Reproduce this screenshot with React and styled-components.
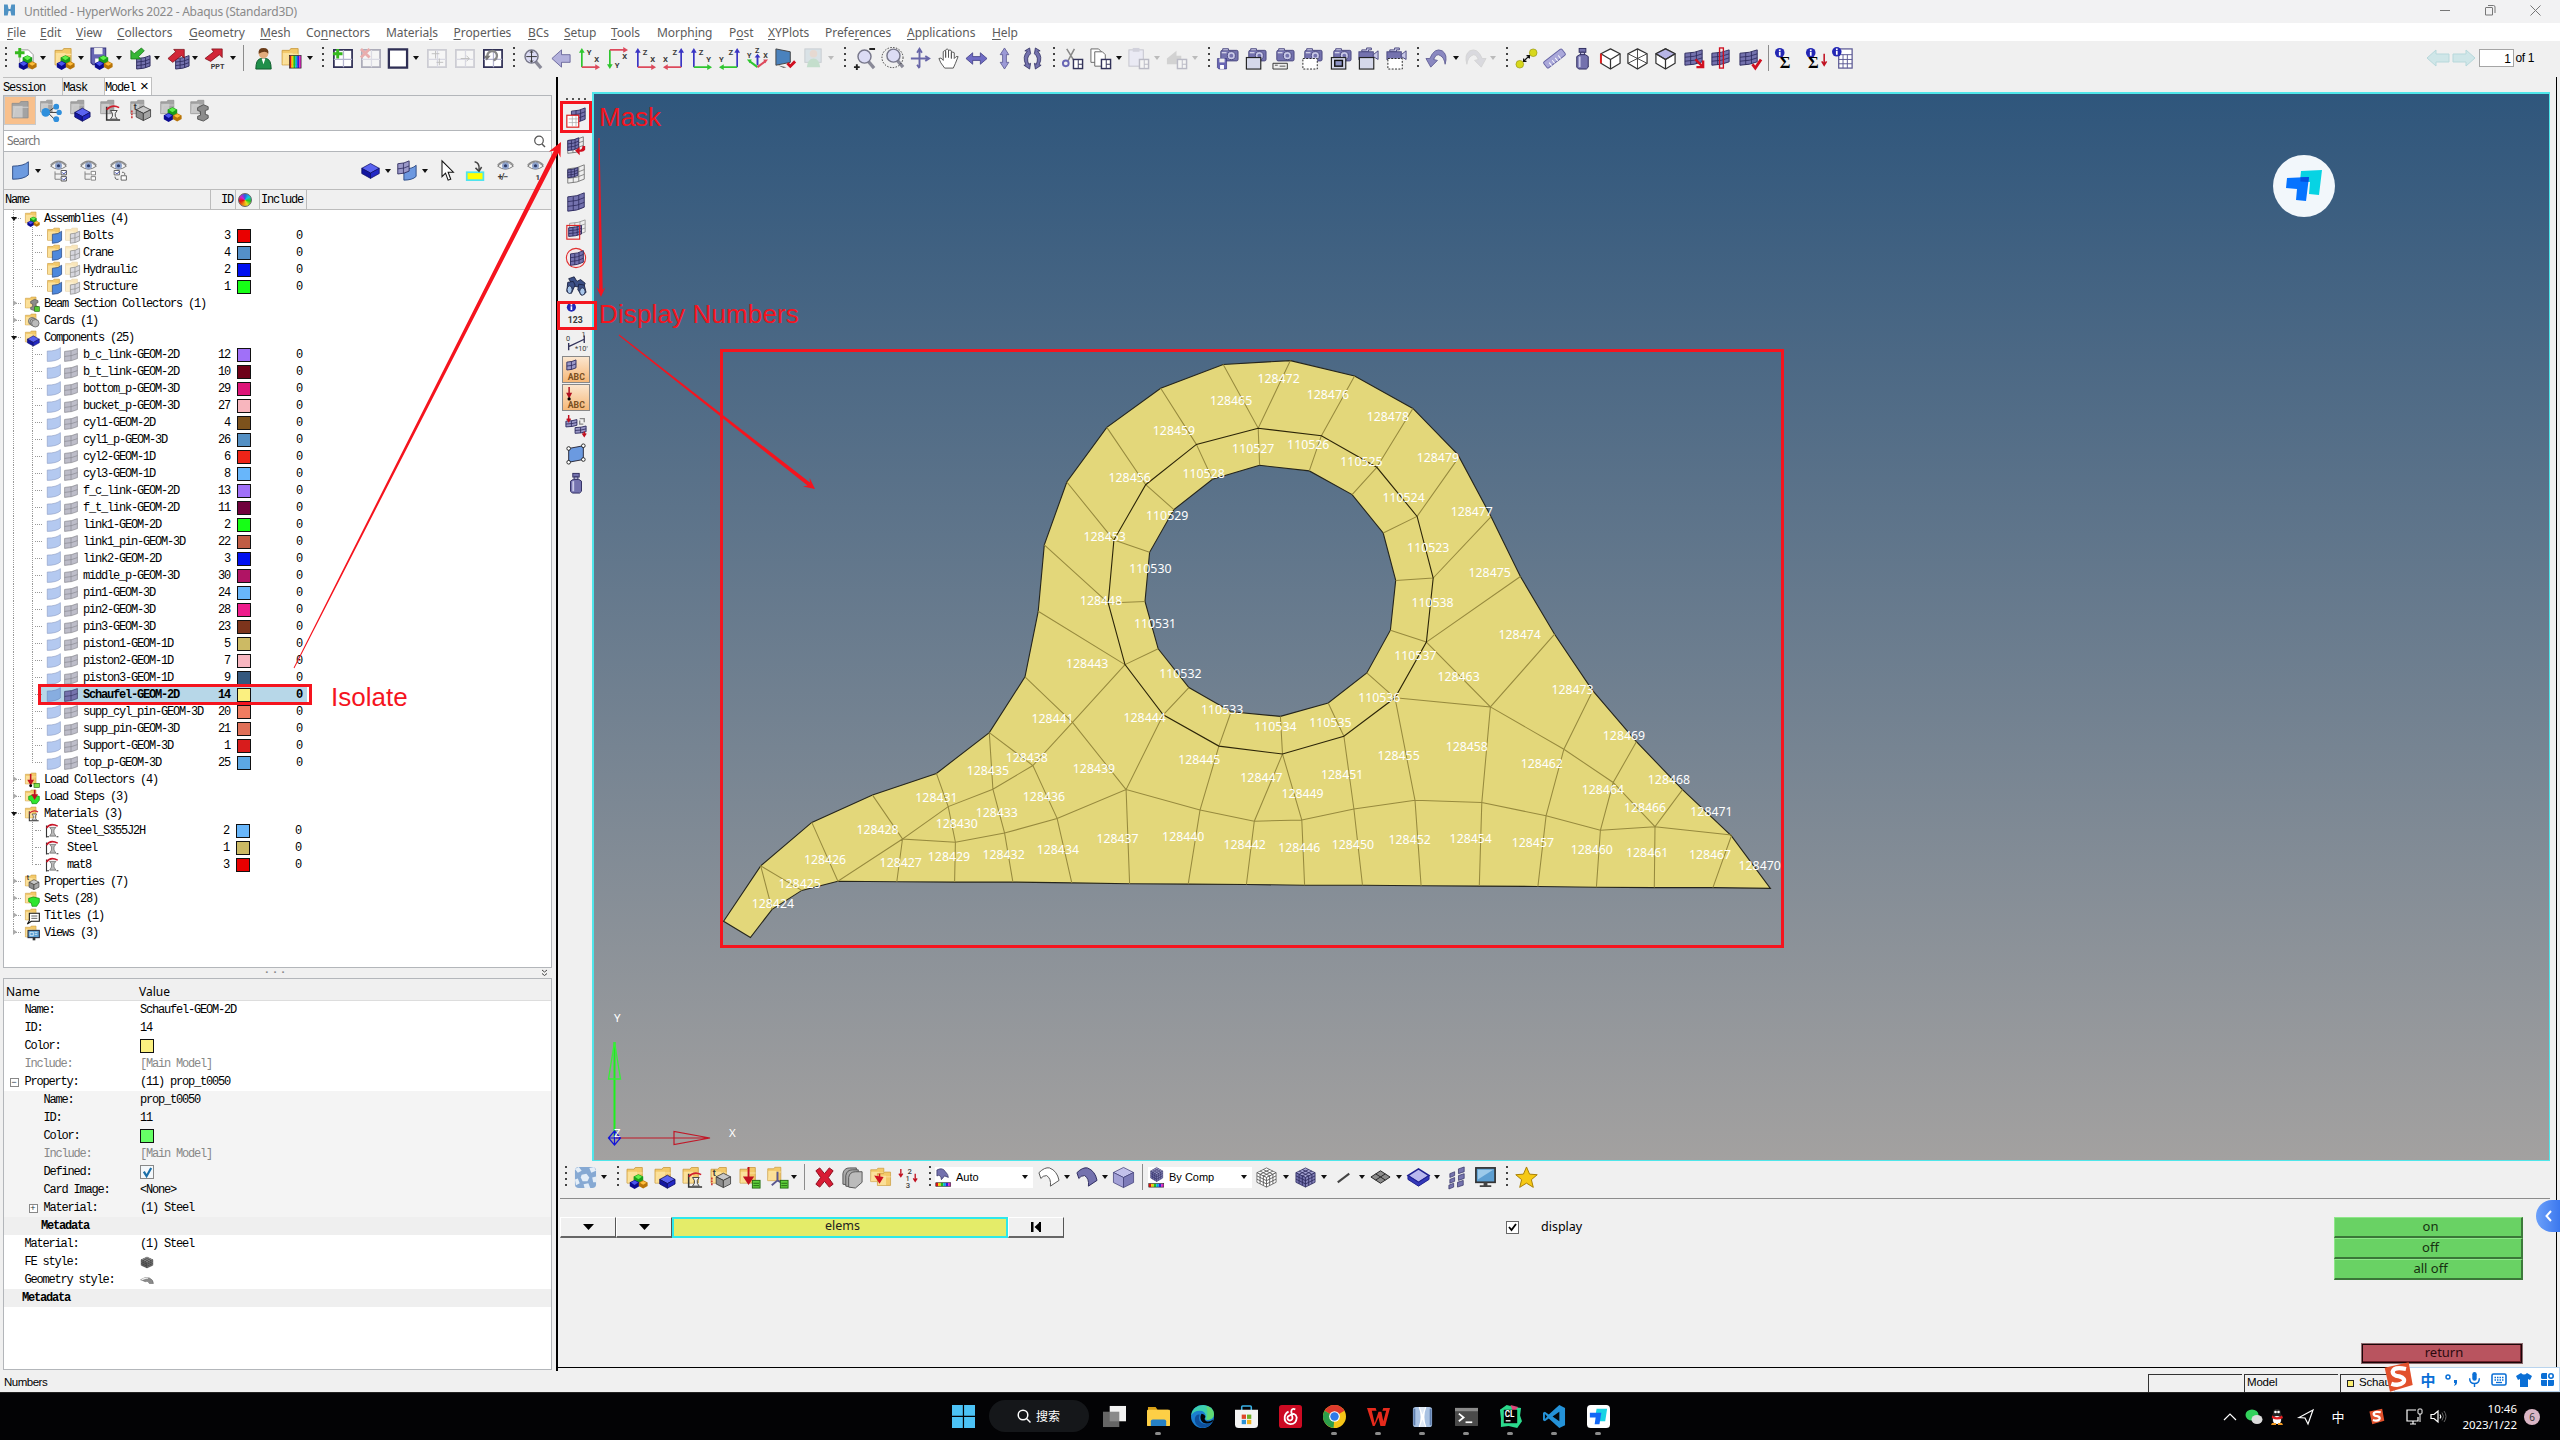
import React from "react";
import styled, { createGlobalStyle, css } from "styled-components";

const ui = '"Noto Sans", "Open Sans", sans-serif';
const mono = '"Liberation Mono", "Noto Sans CJK SC", monospace';
const sans = '"Liberation Sans", Arial, sans-serif';
const red = "#f5141e";

const Global = createGlobalStyle`
  * { box-sizing: border-box; }
  body { margin: 0; background: #000; overflow: hidden; }
`;

/* ---------- drawing primitives ---------- */

const P = { d: "#2d2b5e", m: "#7472ae", l: "#c9c9e8", w: "#f3f3fb" };

const Hex = ({ x, y, r, c, k = "none" }) => (
  <g stroke={k} strokeWidth=".8" strokeLinejoin="round">
    <path d={`M${x} ${y - r}l${r} ${r / 2}l${-r} ${r / 2}l${-r} ${-r / 2}z`} fill={c[0]} />
    <path d={`M${x - r} ${y - r / 2}l${r} ${r / 2}v${r}l${-r} ${-r / 2}z`} fill={c[1]} />
    <path d={`M${x + r} ${y - r / 2}l${-r} ${r / 2}v${r}l${r} ${-r / 2}z`} fill={c[2]} />
  </g>
);
const Blob = ({ x, y, r, c }) => (
  <g>
    <path d={`M${x - r} ${y - r * 0.4}L${x} ${y - r * 0.9}L${x + r} ${y - r * 0.4}V${y + r * 0.4}L${x} ${y + r}L${x - r} ${y + r * 0.4}z`} fill={c[1]} />
    <path d={`M${x - r * 0.75} ${y - r * 0.35}L${x} ${y - r * 0.75}L${x + r * 0.75} ${y - r * 0.35}L${x} ${y + r * 0.15}z`} fill={c[0]} />
  </g>
);
const GR = ["#5ff04a", "#1a9c1a"], BL = ["#4a55ee", "#0a0a90"], OR = ["#ffbe3c", "#b87408"];
const Trio = () => (
  <g>
    <Blob x={14} y={13} r={5} c={GR} />
    <Blob x={10} y={19} r={5} c={BL} />
    <Blob x={19} y={19} r={4.6} c={OR} />
  </g>
);
const Folder = ({ gray, x = 0, y = 0, s = 1 }) => {
  const c = gray ? ["#8e8e8e", "#cfcfcf", "#a3a3a3"] : ["#c99a3e", "#fbe3a0", "#f3c969"];
  return (
    <g transform={`translate(${x} ${y}) scale(${s})`}>
      <path d="M2 5V3.2h7l1.2-1.7h7V17H2z" fill={c[2]} stroke={c[0]} strokeWidth=".8" />
      <path d="M2.6 5.6H12V16.6H2.6z" fill={c[1]} opacity=".85" />
      <path d="M3 16.5L5 7h12.5" stroke={c[1]} strokeWidth="1" fill="none" />
    </g>
  );
};
const Mesh = ({ x = 3, y = 4, w = 18, h = 16, c = P.m, k = P.d, n = 3 }) => {
  const lines = [];
  for (let i = 1; i < n; i++) {
    const t = i / n;
    lines.push(`M${x + w * t} ${y + h * 0.22 * (1 - t * t)}v${h * 0.78}`);
    lines.push(`M${x} ${y + h * 0.22 + h * 0.78 * t}Q${x + w * 0.6} ${y + h * 0.2 + h * 0.78 * t} ${x + w} ${y + h * 0.78 * t}`);
  }
  return (
    <g fill="none" stroke={k} strokeWidth="1">
      <path d={`M${x} ${y + h * 0.22}Q${x + w * 0.6} ${y + h * 0.2} ${x + w} ${y}V${y + h * 0.78}Q${x + w * 0.6} ${y + h * 0.98} ${x} ${y + h}z`} fill={c} />
      <path d={lines.join("")} stroke={k} strokeWidth=".9" />
    </g>
  );
};
const Camera = ({ x = 4, y = 1 }) => (
  <g transform={`translate(${x} ${y})`}>
    <rect x="1" y="2.5" width="18" height="11" rx="1.5" fill={P.m} stroke="#4b4980" />
    <path d="M3 2.5V.8h6v1.7" fill={P.l} stroke="#4b4980" />
    <path d="M2 5h5" stroke={P.w} />
    <circle cx="12" cy="8" r="4.2" fill={P.l} stroke="#4b4980" />
    <circle cx="12" cy="8" r="2" fill={P.m} />
  </g>
);
const Video = () => (
  <g fill={P.m} stroke="#4b4980">
    <path d="M5 3h5V1h5v2h-3v2H5z" fill={P.l} />
    <rect x="2" y="5" width="15" height="8" />
    <path d="M17 8l5-4v9l-5-3z" fill={P.l} />
  </g>
);
const Eye = ({ y = 0, x = 0 }) => (
  <g transform={`translate(${x} ${y})`}>
    <path d="M3 7Q12-2 21 7Q12 14 3 7z" fill="#f4f4f4" stroke="#777" strokeWidth="1.1" />
    <path d="M3 5.5Q12-3 21 5.5" fill="none" stroke="#888" strokeWidth="1.3" />
    <circle cx="12" cy="6.6" r="4" fill="#8da2cc" />
    <circle cx="12" cy="6.6" r="1.8" fill="#2b3a66" />
  </g>
);
const Lens = ({ x = 10, y = 9 }) => (
  <g>
    <path d={`M${x + 4} ${y + 5}l6 7`} stroke="#8a8a98" strokeWidth="3.4" />
    <circle cx={x} cy={y} r="6.8" fill="#dcdcf4" stroke="#77778a" strokeWidth="1.5" />
  </g>
);
const T = ({ x, y, s = 8, c = "#3a3a3a", children, b = 700 }) => (
  <text x={x} y={y} fontSize={s} fontWeight={b} fill={c} fontFamily="Roboto, sans-serif">{children}</text>
);
const Axis = ({ mirror, flip, v, h, vl, hl }) => {
  const X = mirror ? 20 : 4, y0 = flip ? 3 : 21;
  return (
    <g>
      <path d={`M${X} ${y0}V${flip ? 19 : 5}`} stroke={v} strokeWidth="1.8" />
      <path d={flip ? `M${X - 3} 18h6l-3 5z` : `M${X - 3} 6h6l-3-5z`} fill={v} />
      <path d={`M${X} ${y0}H${mirror ? 5 : 19}`} stroke={h} strokeWidth="1.8" />
      <path d={mirror ? `M6 ${y0 - 3}v6l-5-3z` : `M18 ${y0 - 3}v6l5-3z`} fill={h} />
      <T x={mirror ? 11 : 9} y={flip ? 22 : 8}>{vl}</T>
      <T x={mirror ? 1 : 17} y={flip ? 13 : 16}>{hl}</T>
    </g>
  );
};
const AR = "#dd4a5c", AG = "#2fc62f", AB = "#3a35c4";
const Window = ({ c = "#2f2f55", o = 1 }) => (
  <g opacity={o} fill="#fff" stroke={c} strokeWidth="1.8">
    <rect x="3" y="3" width="19" height="18" />
    <path d="M3 13h19M13 3v18" stroke="#b5b5cf" strokeWidth="1.3" />
  </g>
);
const Doc = () => <path d="M6 3h9l5 5v14H6z" fill="#fff" stroke="#999" />;
const Plus = ({ x = 6, y = 6, c = "#36b81e" }) => <path d={`M${x - 5} ${y}h10M${x} ${y - 5}v10`} stroke={c} strokeWidth="3" />;
const Floppy = ({ x = 2, y = 2, s = 1 }) => (
  <g transform={`translate(${x} ${y}) scale(${s})`}>
    <path d="M0 0h14v16H2L0 14z" fill="#6866b4" stroke="#34327a" />
    <path d="M3 0h8v6H3z" fill="#eee" />
    <path d="M4 10h6v6H4z" fill="#fff" />
  </g>
);
const Arrow = ({ d, c, k = "none" }) => <path d={d} fill={c} stroke={k} strokeWidth=".8" />;
const Sheet = ({ x = 4, y = 4, w = 14, h = 16, c = "#6d9be0", k = "#27457e" }) => (
  <path d={`M${x} ${y + h * 0.25}Q${x + w * 0.7} ${y + h * 0.25} ${x + w} ${y}V${y + h * 0.75}Q${x + w * 0.7} ${y + h} ${x} ${y + h}z`} fill={c} stroke={k} />
);
const CurveBox = () => (
  <g fill="none">
    <path d="M8 8v14h14" stroke="#333" strokeWidth="1.6" />
    <path d="M8 11Q14 5 21 9" stroke="#d0202e" strokeWidth="1.8" />
    <path d="M12 12h7l-2 3v3l2 3h-7l2-3v-3z" fill="#eee" stroke="#444" />
  </g>
);
const BoxGray = () => <Hex x={15} y={15} r={7.5} c={["#c8c8c8", "#8c8c8c", "#a5a5a5"]} k="#333" />;
const Slab = ({ x = 14, y = 15, r = 8, c = ["#5a63f0", "#1316a0", "#2328c4"], k = "#0a0a60" }) => (
  <g stroke={k} strokeWidth=".8" strokeLinejoin="round">
    <path d={`M${x} ${y - r * 0.8}l${r} ${r * 0.55}l${-r} ${r * 0.55}l${-r} ${-r * 0.55}z`} fill={c[0]} />
    <path d={`M${x - r} ${y - r * 0.25}l${r} ${r * 0.55}v${r * 0.6}l${-r} ${-r * 0.55}z`} fill={c[1]} />
    <path d={`M${x + r} ${y - r * 0.25}l${-r} ${r * 0.55}v${r * 0.6}l${r} ${-r * 0.55}z`} fill={c[2]} />
  </g>
);
const IBeam = () => <path d="M9 9l6-3 5 2v3l-3 1v4l3 1v3l-5 3-6-2v-3l3-1v-4l-3-1z" fill="#8c8c8c" stroke="#555" />;
const Bottle = () => (
  <g stroke="#2d2b5e">
    <rect x="8.5" y="1.5" width="7" height="4" fill={P.m} />
    <path d="M10 5.5h4v3h-4z" fill={P.l} />
    <path d="M6 10l3-2h6l3 2v11l-2 2H8l-2-2z" fill={P.m} />
    <path d="M9 10v11" stroke={P.l} strokeWidth="2" />
  </g>
);
const WireCube = ({ redEdge, hidden, top }) => (
  <g fill="#fff" stroke="#333" strokeWidth="1.3" strokeLinejoin="round">
    <path d="M12 2l10 5v10l-10 6-10-6V7z" />
    {top && <path d="M12 2l10 5-10 6L2 7z" fill="#b7b5e6" />}
    {!hidden && <path d="M2 7l10 6 10-6M12 13v10" fill="none" />}
    {hidden && <path d="M2 7l10 5 10-5M12 2v10M12 12v11M2 17l10-5 10 5" fill="none" strokeWidth=".9" />}
    {redEdge && <path d="M2 7v10" stroke="#e02020" strokeWidth="2" />}
  </g>
);
const Check = ({ d = "M14 18l3 4 6-9" }) => <path d={d} fill="none" stroke="#d01020" strokeWidth="3" />;
const Info = ({ x = 6, y = 6 }) => (
  <g>
    <ellipse cx={x} cy={y} rx="5" ry="5" fill="#2327b4" />
    <path d={`M${x} ${y - 3.5}v1.6M${x} ${y - 1}v4`} stroke="#fff" strokeWidth="1.8" />
  </g>
);
const CubeMesh = ({ c = ["#a5a3d2", "#7270ac", "#8482b8"], k = P.d }) => (
  <g>
    <Hex x={12} y={12} r={10} c={c} k={k} />
    <path
      d="M15.3 3.7l-10 5v10M18.7 5.3l-10 5v10M8.7 3.7l10 5v10M5.3 5.3l10 5v10M2 10.3l10 5 10-5M2 13.7l10 5 10-5"
      fill="none" stroke={k} strokeWidth=".9"
    />
  </g>
);
const Rainbow = ({ x = 2, y = 19, w = 18, h = 4 }) => (
  <g>
    {["#e01010", "#f0d000", "#20c020", "#00b0e0", "#3020e0", "#e020c0"].map((f, i) => (
      <rect key={f} x={x + (w / 6) * i} y={y} width={w / 6} height={h} fill={f} />
    ))}
    <rect x={x} y={y} width={w} height={h} fill="none" stroke="#222" strokeWidth=".7" />
  </g>
);
const Dashed = () => <rect x="3" y="12" width="15" height="11" fill="#fff" stroke="#222" strokeDasharray="2 1.5" />;
const Solid = () => <rect x="2.5" y="11" width="15" height="12" fill="#d5d8ea" stroke="#222" strokeWidth="1.2" />;
const Pane = ({ o = 1 }) => (
  <g opacity={o}>
    <rect x="13" y="13" width="9.5" height="9.5" fill="#fff" stroke="#33335a" strokeWidth="1.5" />
    <path d="M18 13v9M18 18h4" stroke="#33335a" />
  </g>
);

const icons = {
  newDoc: <><Doc /><Plus /><Trio /></>,
  open: <><Folder x={1} y={0} s={1.1} /><Trio /></>,
  save: <><Floppy s={1.1} x={1} y={1} /><Trio /></>,
  imp: <><Mesh x={9} y={9} w={14} h={14} /><Arrow d="M14 1l3 3-6 6 2 2.5H3V3.5L6.500 7z" c="#35b635" k="#187518" /></>,
  exp: <><Mesh x={9} y={9} w={14} h={14} /><Arrow d="M1 12l8-7-2-2.500h11v9l-3-2.500-9 7z" c="#d22638" k="#7c0d18" /></>,
  ppt: <><Arrow d="M1 12l9-7-2-3h11v9l-3-3-9 7z" c="#d22638" k="#7c0d18" /><T x={7} y={23} s={7.5}>PPT</T></>,
  user: <><path d="M4 23Q4 13 9 12h6Q20 13 20 23z" fill="#1f8f4a" stroke="#0f5a2c" /><circle cx="12" cy="7" r="5" fill="#e3ac7c" /><path d="M7 7Q6 1 12 1Q18 1 17 7Q14 3 7 7z" fill="#6b3d1a" /><path d="M10 12l2 6 2-6z" fill="#fff" /></>,
  folderColor: <><Folder x={0} y={0} s={1.1} /><Rainbow x={10} y={9} w={12} h={13} /></>,
  winAdd: <><Window /><Plus x={7} y={7} /></>,
  winDel: <g opacity=".35"><Window /><path d="M2 2l9 9M11 2l-9 9" stroke="#d33" strokeWidth="3" /></g>,
  win: <rect x="3" y="2.5" width="19" height="19" fill="#fff" stroke="#2f2f55" strokeWidth="2.4" />,
  winGrid: <g opacity=".4"><Window c="#99a" /><path d="M7 7h8M11 4v8M15 12v7M12 16h7" stroke="#777" /></g>,
  winSwap: <g opacity=".4"><Window c="#99a" /><path d="M8 12h9M14 9l3 3-3 3" stroke="#777" fill="none" /></g>,
  winRot: <><Window /><path d="M7 11A5 5 0 1 1 13 14" fill="none" stroke="#888" strokeWidth="2.5" /><path d="M3 9h7l-4 5z" fill="#777" /></>,
  fit: <><Lens x={11} y={10} /><path d="M11 4.5v11M5.5 10h11M9.500 6l1.500-2 1.500 2M9.500 14l1.500 2 1.500-2" stroke="#333" fill="none" /></>,
  back: <Arrow d="M2 12l10-9v5h9v8h-9v5z" c="#b3b1dc" k="#55538c" />,
  xy: <Axis v={AG} h={AR} vl="Y" hl="X" />,
  xyf: <Axis flip v={AG} h={AR} vl="Y" hl="X" />,
  zx: <Axis v={AB} h={AR} vl="Z" hl="X" />,
  xz: <Axis mirror v={AB} h={AR} vl="Z" hl="X" />,
  zy: <Axis v={AB} h={AG} vl="Z" hl="Y" />,
  yz: <Axis mirror v={AB} h={AG} vl="Z" hl="Y" />,
  iso: <><path d="M12 19V9" stroke={AB} strokeWidth="2" /><path d="M9 11h6l-3-4z" fill={AB} /><path d="M12 21l-8-6" stroke={AG} strokeWidth="2" /><path d="M1 13l5 0-2 4z" fill={AG} /><path d="M12 21l8-6" stroke={AR} strokeWidth="2" /><path d="M23 13h-5l2 4z" fill={AR} /><T x={9.5} y={6.5} s={7.5}>Z</T><T x={1} y={11} s={7.5}>Y</T><T x={18} y={11} s={7.5}>X</T></>,
  screen: <><path d="M2 2l15 3v11L2 19z" fill="#4a82bd" stroke="#444" /><path d="M4 19l9 2-3 1z" fill="#666" /><Check d="M14 17l3 3 5-5" /></>,
  userDim: <g opacity=".25"><rect x="3" y="2" width="17" height="14" fill="#9bc" stroke="#567" /><circle cx="12" cy="7" r="4" fill="#c97" /><path d="M5 21Q6 12 12 12Q18 12 19 21z" fill="#4a6" /></g>,
  zoomPM: <><Lens x={12} y={10} /><path d="M17 2h6M1 21h6M4 18v6" stroke="#222" strokeWidth="2" /></>,
  zoomD: <><Lens x={13} y={9} /><ellipse cx="12" cy="11" rx="11" ry="10.5" fill="none" stroke="#333" strokeDasharray="1.5 1.5" /></>,
  rot: <g fill="none" stroke="#6866a8" strokeWidth="2"><path d="M12 3v18M3 12h18" /><path d="M9.5 6L12 2l2.5 4M18 9.5l4 2.5-4 2.5M9.5 18.500L12 22" /></g>,
  hand: <path d="M8 22Q3 16 2 12Q4 10 6.500 14V5Q7.500 2.500 9 5v6V3Q10.500 1 12 3v8V4Q13.500 2 15 4v8V6Q16.500 4.500 18 6V12Q20 9 22 10Q19 18 17 22z" fill="#fff" stroke="#555" />,
  lr: <Arrow d="M1 12l7-6v4h8V6l7 6-7 6v-4H8v4z" c="#6f6cc4" k="#3c3a80" />,
  ud: <Arrow d="M12 1l4.500 7h-2.500v8h2.500l-4.500 7-4.500-7H10V8H7.500z" c="#9c9ad6" k="#55538c" />,
  spin: <g fill={P.m} stroke={P.d} strokeWidth=".8"><path d="M9 1L10 7Q5 11 8 18l2-1-1 6-6-4 2-.5Q1 10 6.500 4.500L4 4z" /><path d="M15 1l-1 6Q19 11 16 18l-2-1 1 6 6-4-2-.5Q23 10 17.500 4.500L20 4z" /></g>,
  cut: <><path d="M6 2l8 13M14 2L7 15" stroke="#888" strokeWidth="1.6" /><circle cx="5" cy="17" r="3" fill="none" stroke="#6866b4" strokeWidth="2" /><Pane /></>,
  copy: <><path d="M2 2h8l3 3v11H2z" fill="#fff" stroke="#666" /><path d="M6 5h8l3 3v12H6z" fill="#fff" stroke="#666" /><Pane /></>,
  paste: <g opacity=".28"><rect x="2" y="3" width="15" height="17" fill="#ddf" stroke="#557" /><rect x="6" y="1" width="7" height="4" fill="#88a" /><Pane /></g>,
  mega: <g opacity=".28"><path d="M2 12l10-8v5h5v9h-5L2 18z" fill="#888" /><Pane /></g>,
  camSave: <><Camera /><Floppy x={1.5} y={12} s={0.68} /></>,
  camWin: <><Camera /><Solid /></>,
  camKey: <><Camera /><path d="M1 17h15v6H1z" fill="#eee" stroke="#333" /><path d="M3 19h3M8 20h6" stroke="#555" /></>,
  camDash: <><Camera /><Dashed /></>,
  camArea: <><Camera /><Solid /><rect x="6" y="14" width="8" height="6" fill="#8d93c4" stroke="#111" strokeWidth="1.5" /></>,
  vidWin: <><Video /><Solid /></>,
  vidDash: <><Video /><Dashed /></>,
  undo: <Arrow d="M1 12l5 9 7-7-4-1Q12 6 16 9Q20 11 21 18Q24 8 18 4Q10 0 5 12z" c="#8a88c0" k="#55538c" />,
  redo: <g opacity=".25" transform="matrix(-1 0 0 1 24 0)"><Arrow d="M1 12l5 9 7-7-4-1Q12 6 16 9Q20 11 21 18Q24 8 18 4Q10 0 5 12z" c="#99a" k="#777" /></g>,
  dist: <><circle cx="5" cy="18" r="4" fill="#d8d81c" stroke="#88880a" strokeWidth=".6" /><circle cx="19" cy="6" r="4" fill="#d8d81c" stroke="#88880a" strokeWidth=".6" /><path d="M9 15l6-6M9 12v3h3M12 9h3v3" stroke="#111" fill="none" strokeWidth="1.3" /></>,
  ruler: <g transform="rotate(-38 12 12)"><rect x="0" y="8" width="24" height="8" rx="1.5" fill="#aaa8da" stroke="#6664a4" /><path d="M5 12v4M9 12v4M13 12v4M17 12v4" stroke="#fff" /></g>,
  bottle: <Bottle />,
  cubeRed: <WireCube redEdge />,
  cubeHid: <WireCube hidden />,
  cubeTop: <WireCube top />,
  meshArrow: <><Mesh x={2} y={3} /><path d="M13 13l8 8M21 14v7h-7" stroke="#d01020" strokeWidth="2.5" fill="none" /></>,
  meshLine: <><Mesh x={3} y={3} /><rect x="11" y="1" width="4" height="21" fill="none" stroke="#d01020" strokeWidth="1.4" /></>,
  meshCheck: <><Mesh x={1} y={3} /><Check /></>,
  sum: <><Info /><text x="6" y="22" fontSize="17" fontWeight="700" fontFamily="Liberation Serif, serif">Σ</text></>,
  sumLoad: <><Info /><text x="3" y="22" fontSize="17" fontWeight="700" fontFamily="Liberation Serif, serif">Σ</text><path d="M20 7v11M17.500 15l2.500 4 2.500-4" stroke="#c01020" strokeWidth="1.6" fill="none" /></>,
  calc: <><rect x="7" y="2" width="14" height="20" fill="#fff" stroke="#5c5a94" strokeWidth="1.3" /><path d="M7 8h14M7 13h14M7 17.500h14M11.500 8v14M16 8v14" stroke="#5c5a94" /><Info x={5} y={5} /></>,

  fGray: <Folder gray x={1} y={1} s={1.1} />,
  fTree: <><Folder gray s={0.8} /><path d="M9 14l8-6M9 14h11M9 14l8 8" stroke="#333" /><circle cx="7" cy="14" r="4.5" fill="#2f8fdc" /><circle cx="18" cy="8" r="3" fill="#2f8fdc" /><circle cx="21" cy="14" r="2.8" fill="#2f8fdc" /><circle cx="18" cy="21" r="3" fill="#2f8fdc" /></>,
  fComp: <><Folder gray s={0.9} /><Slab y={16} /></>,
  fMat: <><Folder gray s={0.9} /><CurveBox /></>,
  fProp: <><Folder gray s={0.9} /><BoxGray /><T x={5} y={11} s={9}>t</T><path d="M3 12v9" stroke="#c22" strokeDasharray="2 1" strokeWidth="1.5" /></>,
  fAsm: <><Folder gray s={0.9} /><Trio /></>,
  fBeam: <><Folder gray s={0.9} /><IBeam /></>,

  sheet: <Sheet x={3} y={2} w={18} h={20} />,
  eyeTree1: <><Eye /><path d="M8 13v9h6M8 16h6" stroke="#777" fill="none" /><path d="M15 12h6v5h-6zM15 19h6v5h-6z" fill="#fff" stroke="#444" /><path d="M16 14l2 2 3-3M16 21l2 2 3-3" stroke="#2433a0" fill="none" /></>,
  eyeTree2: <><Eye /><path d="M8 13v9h6M8 16h6" stroke="#777" fill="none" /><path d="M15 13h5v4h-5zM15 19h5v4h-5z" fill="#fff" stroke="#777" /></>,
  eyeTree3: <><Eye /><path d="M7 12h6v5H7zM15 18h6v5h-6z" fill="#fff" stroke="#555" /><path d="M8 14l2 2 3-3" stroke="#2433a0" fill="none" /><path d="M16 14q4 0 3 3M8 19q0 4 4 3" stroke="#555" fill="none" /></>,
  boxBlue: <Slab x={12} y={12} r={10} />,
  meshSheet: <><Sheet x={9} y={6} w={14} h={17} c="#6c98e0" /><Mesh x={2} y={1} w={13} h={15} n={2} c="#9a98c8" /></>,
  cursor: <path d="M8 1v18l4-4 3 8 3-1-3-8h6z" fill="#fff" stroke="#111" strokeWidth="1.2" />,
  highlight: <><rect x="2" y="14" width="19" height="9" fill="#ff0" stroke="#4fe3ee" strokeWidth="2" /><path d="M11 2Q17 3 16 11M12 9l4 4 3-5" stroke="#444" strokeWidth="1.7" fill="none" /></>,
  eyePM: <><Eye /><T x={3} y={23} s={10}>+/−</T></>,
  eyeOne: <><Eye /><T x={12} y={23} s={9}>1</T></>,

  mask: <><Mesh x={7} y={1} w={15} h={16} /><rect x="2" y="9" width="13" height="13" fill="#fff" stroke="#e02020" strokeWidth="1.3" /><path d="M4 13h10M4 17h10M8 10v11M12 10v11" stroke="#aaa" strokeWidth=".8" /></>,
  mask2: <><Mesh x={3} y={2} w={17} h={18} c="#eee" k="#777" /><Mesh x={3} y={3} w={12} h={14} /><path d="M22 12v4q-2 3-6 2v4l-5-5 5-4v3q3 0 3-4z" fill="#d01020" /></>,
  mask3: <><Mesh x={3} y={2} w={18} h={20} c="#eee" k="#777" /><Mesh x={3} y={5} w={11} h={11} /></>,
  mask4: <Mesh x={3} y={2} w={18} h={20} />,
  mask5: <><Mesh x={5} y={1} w={17} h={17} c="#eee" k="#999" /><Mesh x={4} y={7} w={14} h={12} /><rect x="2" y="7" width="14" height="15" fill="none" stroke="#e02020" strokeWidth="1.2" /></>,
  mask6: <><circle cx="12" cy="12" r="10.5" fill="#f3e9ec" stroke="#e03030" strokeWidth="1.2" /><Mesh x={6} y={4} w={14} h={16} /></>,
  binoc: <g fill="#3c4f86" stroke="#1c2444"><path d="M4 4l6-2 3 5 4-2 5 4-2 5-6-1-5-1z" /><path d="M3 8l6-1 2 4-4 9-5-2z" /><path d="M15 10l6 1 2 8-5 3-4-6z" /><ellipse cx="5" cy="16" rx="2.800" ry="4.200" fill="#a9c6ea" /><ellipse cx="19" cy="18" rx="3" ry="4" fill="#a9c6ea" /></g>,
  nums: <><Info x={7} y={4.5} /><T x={3} y={22} s={9.5}>123</T></>,
  range: <><path d="M4 21v-8M4 17L21 9M21 5v8" stroke="#33335a" strokeWidth="1.5" fill="none" /><T x={1} y={11} s={8} b={400}>0</T><T x={18} y={7} s={8} b={400}>1</T><T x={11} y={22} s={8} b={400}>*10'</T></>,
  abc1: <><Mesh x={2} y={1} w={10} h={11} n={2} c="#9a98c8" /><T x={3} y={22.5} s={9.5} c="#7a4f1e">ABC</T></>,
  abc2: <><path d="M4.500 0v10M2.500 7l2 4 2-4z" stroke="#b01020" fill="#b01020" strokeWidth="1.6" /><circle cx="4.5" cy="13" r="1.8" /><T x={3} y={22.5} s={9.5} c="#7a4f1e">ABC</T></>,
  shift: <><Mesh x={1} y={5} w={12} h={8} n={2} c="#9a98c8" /><Mesh x={11} y={12} w={12} h={8} n={2} c="#9a98c8" /><path d="M4 0v6M2 4l2 3 2-3M21 18v5M19 20l2 3 2-3" stroke="#c01020" strokeWidth="1.6" fill="none" /><path d="M16 4h5v4M20 10h-4V6" stroke="#888" strokeWidth="1.5" fill="none" /></>,
  surf: <><path d="M4 6L20 3v15L4 21z" fill="#6b9ae0" stroke="#223" /><g fill="#fff" stroke="#222"><circle cx="4" cy="6" r="2" /><circle cx="20" cy="3" r="2" /><circle cx="20" cy="18" r="2" /><circle cx="4" cy="21" r="2" /></g></>,

  tv: <><rect x="1" y="1" width="22" height="22" rx="4" fill="#86a9d3" /><g fill="#e4eef8"><path d="M8 9l5-1 3 4-2 4-5 0-2-4z" /><path d="M1 3l4-2 3 4-4 2zM16 2l5-1 2 4-5 2zM1 14l3-1 2 5-4 2zM10 19l5-1 2 5h-6zM19 12l4-1v6l-3 0z" /></g></>,
  bAsm: <><Folder s={1.05} /><Trio /></>,
  bComp: <><Folder s={1.05} /><Slab x={15} y={16} /></>,
  bMat: <><Folder s={1.05} /><CurveBox /></>,
  bProp: <><Folder s={1.05} /><BoxGray /><T x={4} y={10} s={9}>t</T><path d="M3 12v9" stroke="#c22" strokeDasharray="2 1" strokeWidth="1.5" /></>,
  bLoad: <><Folder s={1.05} /><path d="M11 1v14M7 12l4 6 4-6z" stroke="#c01020" fill="#c01020" strokeWidth="2" /><rect x="15" y="15" width="8" height="8" fill="#5fd03c" stroke="#246c12" /><path d="M16 18h6M16 20.500h6" stroke="#246c12" /></>,
  bSys: <><Folder s={0.9} /><path d="M12 6v9l-6 5M12 15l5 3" stroke="#5a5890" strokeWidth="2" fill="none" /><rect x="15" y="15" width="8" height="8" fill="#5fd03c" stroke="#246c12" /><path d="M16 18h6M16 20.500h6" stroke="#246c12" /></>,
  del: <path d="M3 5l4-3 5 6 5-6 4 3-5 7 5 7-4 3-5-6-5 6-4-3 5-7z" fill="#d81c34" stroke="#8c0c1c" />,
  cards: <g fill="#a9a9a9" stroke="#555"><path d="M2 8q1-6 7-6h7v11l-7 7-7-1z" /><path d="M5 10q1-6 7-6h6v11l-6 7-7-1z" /><path d="M8 12q1-6 7-6h7v11l-7 6-7-1z" fill="#bbb" /></g>,
  moveF: <><Folder x={0} y={1} s={0.9} /><Folder x={7} y={5} s={0.9} /><path d="M11 8v6M7 11l4 6 3-5z" stroke="#d01020" fill="#d01020" strokeWidth="1.5" /></>,
  renum: <><T x={11} y={8} s={8} b={500}>2</T><T x={9} y={16} s={7} b={500}>1</T><T x={9} y={23} s={8} b={500}>3</T><path d="M4 3v7M2 8l2 3 2-3M19 8v7M17 13l2 3 2-3" stroke="#c01020" strokeWidth="1.4" fill="none" /></>,
  autoI: <><path d="M3 4Q12 0 16 6Q21 10 21 14L15 12L10 17Q9 9 3 12z" transform="scale(.85)" fill={P.m} stroke={P.d} /><Rainbow x={1} y={18} w={20} /></>,
  curveW: <path d="M2 7Q8 1 13 2Q21 5 23 15l-9 6Q15 13 10 10Q6 10 4 13z" fill="#fff" stroke="#555" />,
  curveP: <path d="M2 7Q8 1 13 2Q21 5 23 15l-9 6Q15 13 10 10Q6 10 4 13z" fill={P.m} stroke={P.d} />,
  cubeP: <Hex x={12} y={12} r={10.5} c={["#c3c1ea", "#a3a1d6", "#7d7bb8"]} k="#44427a" />,
  compI: <><g transform="translate(2 -1) scale(.8)"><CubeMesh /></g><Rainbow x={1} y={19} w={20} /></>,
  cubeWM: <CubeMesh c={["#fff", "#fff", "#fff"]} k="#555" />,
  cubePM: <CubeMesh />,
  line1d: <path d="M6 17L18 8" stroke="#444" strokeWidth="2.2" />,
  sh2d: <><path d="M12 5l10 6.500-10 6.500-10-6.500z" fill="#8a8a8a" stroke="#222" /><path d="M7 8.200l10 6.500M17 8.200l-10 6.500" stroke="#222" /></>,
  sh3d: <><path d="M12 3l11 7-11 7-11-7z" fill="#b9b8ee" stroke="#1f2090" strokeWidth="1.6" /><path d="M1 10v4l11 7 11-7v-4l-11 7z" fill="#3338b8" stroke="#1f2090" /></>,
  dotsI: <g fill="#7674ae" stroke="#2d2b5e" strokeWidth=".7"><path d="M4 8l5-2v4l-5 2zM13 3l6-2v5l-6 2zM4 14l5-2v4l-5 2zM13 10l6-2v5l-6 2zM3 20l5-2v4l-5 2zM12 17l6-2v5l-6 2z" /></g>,
  monitor: <><rect x="2" y="2" width="20" height="15" fill="#5d9fd2" stroke="#333" strokeWidth="1.8" /><path d="M4 4h16L4 14z" fill="#9ccaea" /><path d="M10 17h4v3h4v2H6v-2h4z" fill="#444" /></>,
  star: <path d="M12 1l3.2 7.5 8 .6-6.100 5.200 2 8-7.100-4.400-7.100 4.400 2-8L.8 9.100l8-.6z" fill="#f6c915" stroke="#a67c00" />,

  tAsm: <><Folder s={1.05} /><Trio /></>,
  tBeam: <><Folder s={1.05} /><g transform="translate(1 -1)"><IBeam /></g><rect x="16" y="16" width="7" height="7" fill="#56c832" stroke="#246c12" /></>,
  tCard: <><Folder s={1.05} /><g transform="translate(5 5) scale(.8)" fill="#bbb" stroke="#555" strokeWidth="1.3"><circle cx="9" cy="9" r="7" /><circle cx="12" cy="11" r="7" /><circle cx="15" cy="13" r="7" /></g></>,
  tComp: <><Folder s={1.05} /><Slab x={14} y={16} r={9} /></>,
  tLoad: <><Folder s={1.05} /><path d="M10 3v14M7 13l3 5 3-5z" stroke="#c01020" fill="#c01020" strokeWidth="2.4" /><circle cx="10" cy="20.5" r="2.2" /><rect x="15" y="17" width="8" height="6" fill="#7ee04a" stroke="#246c12" /></>,
  tStep: <><Folder s={1.05} /><path d="M7 11l7-2 9 2v6l-4 5h-7l-1-4-4-2z" fill="#2ee62e" stroke="#0a8a0a" /><path d="M16 1v10M13 9l3 5 3-5z" stroke="#c01020" fill="#c01020" strokeWidth="2.4" /></>,
  tMat: <><Folder s={1.05} /><CurveBox /></>,
  tProp: <><Folder s={1.05} /><Hex x={15} y={16} r={7.5} c={["#c8c8c8", "#8c8c8c", "#a5a5a5"]} k="#333" /><T x={4} y={9} s={10}>t</T></>,
  tSet: <><Folder s={1.05} /><path d="M7 11l7-2 9 2v6l-4 6h-7l-1-5-4-2z" fill="#2ee62e" stroke="#0a8a0a" /></>,
  tTitle: <><Folder s={1.05} /><path d="M8 8h15v12H11l-6 4 3-5z" fill="#fff" stroke="#111" strokeWidth="1.6" /><path d="M11 12h9M11 15.500h9" stroke="#111" /></>,
  tView: <><Folder s={1.05} /><rect x="6" y="8" width="17" height="11" fill="#5d9fd2" stroke="#223" strokeWidth="1.5" /><path d="M9 11h5v5H9zM16 11h4M16 14h4" stroke="#fff" fill="none" /><path d="M13 19h4v4h-4z" fill="#333" /></>,
  fSheet: <><Folder s={1.1} /><Sheet x={9} y={6} w={13} h={17} c="#4d88dc" /></>,
  fMesh: <><g opacity=".45"><Folder s={1.1} /></g><Mesh x={9} y={6} w={13} h={17} n={2} c="#d7d7de" k="#888" /></>,
  cSheet: <Sheet x={2} y={1} w={21} h={22} c="#b4c9f0" k="#8d9dc4" />,
  cSheetOn: <Sheet x={2} y={1} w={21} h={22} c="#87ade0" k="#6b89bf" />,
  cMesh: <Mesh x={1} y={1} w={22} h={22} n={2} c="#bdbdc9" k="#77777e" />,
  cMeshOn: <Mesh x={1} y={1} w={22} h={22} n={2} c="#7674ae" k="#22204a" />,
  mat: <><path d="M4 4v19M4 22h4M20 22h3" stroke="#333" strokeWidth="1.8" /><path d="M4 8Q10-1 22 5" stroke="#c8182a" strokeWidth="2.4" fill="none" /><path d="M9 7h10l-3 4v5l3 5H9l3-5v-5z" fill="#bbb" stroke="#555" /></>,
  fe: <CubeMesh c={["#aaa", "#777", "#888"]} k="#2a2a2a" />,
  geo: <><path d="M1 10Q9 1 16 5Q23 10 23 20l-7 0Q14 12 9 15z" fill="#8a8a8a" stroke="#555" /><path d="M3 10Q9 4 14 6" stroke="#eee" strokeWidth="3" fill="none" /></>,
};

const Svg = styled.svg`
  display: block;
  flex: none;
  overflow: visible;
  width: ${(p) => p.$s || 24}px;
  height: ${(p) => p.$h || p.$s || 24}px;
  margin-left: ${(p) => p.$ml || 0}px;
`;
const Ico = ({ n, s, h, ml }) => (
  <Svg $s={s} $h={h} $ml={ml} viewBox="0 0 24 24" preserveAspectRatio="none">{icons[n]}</Svg>
);

/* ---------- frame ---------- */

const Page = styled.div`
  position: relative;
  width: 2560px;
  height: 1440px;
  display: flex;
  flex-direction: column;
  background: #f0f0f0;
  font: 12px/1 ${ui};
  color: #1a1a1a;
  overflow: hidden;
  white-space: pre;
`;
const TitleBar = styled.header`
  display: flex;
  align-items: center;
  height: 23px;
  background: #f2f2f3;
  color: #8a8a8a;
  padding: 0 19px 3px 4px;
  gap: 9px;
`;
const Caption = styled.span`letter-spacing: -0.25px; padding-top: 4px;`;
const WinButtons = styled.div`
  display: flex;
  gap: 34px;
  margin-left: auto;
`;
const MenuBar = styled.nav`
  display: flex;
  align-items: center;
  height: 18px;
  padding: 2px 0 0 7px;
  background: #fff;
  color: #5c5c5c;
  letter-spacing: -0.05px;
  u { text-underline-offset: 2px; }
`;
const MenuItem = styled.span`width: ${(p) => p.$w}px;`;
const ToolBar = styled.div`
  display: flex;
  align-items: center;
  height: ${(p) => p.$h || 36}px;
  padding-bottom: ${(p) => p.$pb || 0}px;
`;
const Grip = styled.i`
  flex: none;
  width: 2px;
  height: 22px;
  margin-left: ${(p) => p.$ml || 0}px;
  background: repeating-linear-gradient(#444 0 2px, transparent 2px 6px);
`;
const Sep = styled.i`
  flex: none;
  width: 1px;
  height: ${(p) => p.$h || 26}px;
  margin-left: ${(p) => p.$ml || 0}px;
  background: #8c8c8c;
`;
const Caret = styled.i`
  flex: none;
  width: 0;
  height: 0;
  margin-left: ${(p) => p.$ml || 0}px;
  border: 3px solid transparent;
  border-top: 4px solid ${(p) => (p.$dim ? "#bbb" : "#111")};
  border-bottom: 0;
`;
const Holder = styled.div`
  flex: none;
  width: ${(p) => p.$w}px;
  margin-left: ${(p) => p.$ml}px;
`;

/* Items are [kind, centre]; margins keep each centre at its offset from the bar's left edge. */
const widths = { grip: 2, sep: 1, v: 6, vd: 6 };
const Tools = ({ items, size = 24 }) => {
  let edge = 0;
  return items.map(([k, c, node, nw], i) => {
    const w = nw || widths[k] || size;
    const ml = c - w / 2 - edge;
    edge = c + w / 2;
    if (k === "grip") return <Grip key={i} $ml={ml} />;
    if (k === "sep") return <Sep key={i} $ml={ml} />;
    if (k === "v" || k === "vd") return <Caret key={i} $ml={ml} $dim={k === "vd"} />;
    if (k === "node") return <Holder key={i} $ml={ml} $w={w}>{node}</Holder>;
    return <Ico key={i} n={k} s={size} ml={ml} />;
  });
};

const topTools = [
  ["grip", 6], ["newDoc", 25.5], ["v", 43], ["open", 63], ["v", 81], ["save", 101], ["v", 119], ["imp", 139], ["v", 157],
  ["exp", 178], ["v", 195], ["ppt", 215], ["v", 233], ["sep", 243.5], ["user", 263], ["folderColor", 291], ["v", 309.5],
  ["grip", 323], ["winAdd", 342], ["winDel", 370], ["win", 397], ["v", 416], ["winGrid", 436], ["winSwap", 464], ["winRot", 492],
  ["grip", 514], ["fit", 532], ["back", 561], ["xy", 589], ["xyf", 617], ["zx", 645], ["xz", 673], ["zy", 701], ["yz", 729],
  ["iso", 757], ["screen", 785], ["userDim", 813], ["vd", 831], ["grip", 845], ["zoomPM", 864], ["zoomD", 892], ["rot", 919.5],
  ["hand", 948], ["lr", 976], ["ud", 1004], ["spin", 1032], ["grip", 1054], ["cut", 1072], ["copy", 1100], ["v", 1119],
  ["paste", 1138], ["vd", 1157], ["mega", 1176], ["vd", 1195], ["grip", 1209], ["camSave", 1227], ["camWin", 1255.5],
  ["camKey", 1283.5], ["camDash", 1311.5], ["camArea", 1340], ["vidWin", 1368], ["vidDash", 1396], ["grip", 1418],
  ["undo", 1436.5], ["v", 1455.5], ["redo", 1475], ["vd", 1493], ["grip", 1507], ["dist", 1526], ["ruler", 1554],
  ["bottle", 1582], ["cubeRed", 1610], ["cubeHid", 1637.5], ["cubeTop", 1665.5], ["meshArrow", 1694], ["meshLine", 1720],
  ["meshCheck", 1750], ["sep", 1768.5], ["sum", 1785], ["sumLoad", 1816], ["calc", 1843],
];
const Pager = styled.div`
  display: flex;
  align-items: center;
  margin-left: auto;
  padding-right: 26px;
  gap: 4px;
  font-family: ${sans};
  font-size: 12px;
  letter-spacing: -0.4px;
  color: #000;
`;
const PageBox = styled.span`
  width: 35px;
  height: 18px;
  border: 1px solid #a5a5a5;
  background: #fff;
  text-align: right;
  padding: 3px 2px;
  margin: 0 -2px 0 0;
`;

const Body = styled.div`
  display: flex;
  height: 1294px;
`;
const Left = styled.aside`
  display: flex;
  flex-direction: column;
  width: 558px;
  padding: 0 4px 0 3px;
  border-right: 2px solid #000;
  font-family: ${mono};
  letter-spacing: -1.2px;
  color: #000;
`;
const Tabs = styled.div`display: flex; height: 18px;`;
const Tab = styled.div`
  width: ${(p) => p.$w}px;
  padding-top: 4px;
  border: 1px solid #c0c0c0;
  border-width: 1px 1px 0 0;
  background: ${(p) => (p.$on ? "#fff" : "#efefef")};
`;
const CloseMark = styled.span`
  margin-left: 5px;
  font: 15px/8px ${sans};
`;
const Box = styled.div`
  display: flex;
  flex-direction: column;
  border: 1px solid #b3b6ba;
  height: ${(p) => p.$h}px;
  background: ${(p) => (p.$bg || "#f0f0f0")};
`;
const Views = styled.div`
  display: flex;
  height: 34px;
  padding: 1px 0 0 1px;
`;
const ViewButton = styled.span`
  display: grid;
  place-items: center;
  width: 30px;
  height: 27px;
  background: ${(p) => (p.$on ? "#f8c08c" : "none")};
  outline: ${(p) => (p.$on ? "1px solid #c9c9c9" : "none")};
`;
const Search = styled.div`
  display: flex;
  justify-content: space-between;
  align-items: center;
  height: 22px;
  padding: 0 5px 0 3px;
  border: solid #b3b6ba;
  border-width: 1px 0;
  background: #fff;
  color: #777;
  font: 12px/1 ${ui};
  letter-spacing: -0.9px;
`;
const HeadRow = styled.div`
  display: flex;
  height: 21px;
  border: solid #bcbcbc;
  border-width: 1px 0;
`;
const HeadCell = styled.div`
  display: flex;
  align-items: center;
  justify-content: ${(p) => p.$j || "flex-start"};
  width: ${(p) => p.$w}px;
  padding: ${(p) => p.$pad || "0 2px 0 1px"};
  border-right: 1px solid #bcbcbc;
`;
const Wheel = styled.i`
  width: 14px;
  height: 14px;
  border-radius: 50%;
  background: conic-gradient(#2b5be0, #10c8e0, #22c822, #e8e020, #f08010, #e01010, #d020d0, #2b5be0);
  border: 1px solid #666;
`;
const Tree = styled.div`
  flex: 1;
  background: #fff;
`;
const Row = styled.div`
  display: flex;
  align-items: center;
  height: 17px;
  padding-left: 9px;
  ${(p) => p.$on && css`
    font-weight: 700;
    background: linear-gradient(90deg, transparent 37px, #b7d7e8 37px 303px, transparent 303px);
  `}
`;
const Guide = styled.span`
  position: relative;
  flex: none;
  width: ${(p) => p.$w}px;
  height: ${(p) => (p.$end ? 9 : 17)}px;
  align-self: flex-start;
  border-left: 1px dotted #999;
  &::after {
    content: "";
    position: absolute;
    display: ${(p) => (p.$tick ? "block" : "none")};
    left: 2px;
    right: 3px;
    top: 8px;
    border-top: 1px dotted #999;
  }
`;
const Twist = styled.i`
  position: absolute;
  z-index: 1;
  left: -3px;
  top: ${(p) => (p.$open ? 7 : 5)}px;
  border: 3px solid transparent;
  ${(p) => (p.$open ? "border-top: 4px solid #111; border-bottom: 0;" : "border-left: 4px solid #aaa; border-right: 0; left: -1px;")}
`;
const Name = styled.span`
  width: ${(p) => p.$w}px;
  margin-left: ${(p) => p.$ml || 4}px;
`;
const Num = styled.span`
  width: ${(p) => p.$w}px;
  text-align: right;
`;
const Swatch = styled.i`
  flex: none;
  width: 14px;
  height: 14px;
  margin: 0 0 0 ${(p) => p.$ml || 0}px;
  border: 1px solid #111;
  background: ${(p) => p.$c};
`;
const Splitter = styled.div`
  position: relative;
  height: 10px;
  text-align: center;
  font: 700 11px/1px ${ui};
  letter-spacing: 5px;
  color: #888;
`;
const Chevrons = styled(Svg)`
  position: absolute;
  right: 4px;
  top: 1px;
`;
const PropHead = styled.div`
  display: flex;
  height: 22px;
  padding: 7px 0 0 2px;
  border-bottom: 1px solid #ddd;
  background: #f0f0f0;
  font: 12px/1 ${ui};
  letter-spacing: 0;
  span { width: 133px; }
`;
const PropRow = styled.div`
  display: flex;
  align-items: center;
  height: 18px;
  background: ${(p) => p.$bg || "#fff"};
  color: ${(p) => (p.$dim ? "#888" : "#000")};
  font-weight: ${(p) => (p.$bold ? 700 : 400)};
`;
const PropLabel = styled.span`
  display: flex;
  align-items: center;
  width: 136px;
  padding-left: ${(p) => p.$pl}px;
`;
const Toggle = styled.i`
  display: grid;
  place-items: center;
  width: 9px;
  height: 9px;
  margin: 0 6px 0 -15px;
  border: 1px solid #888;
  background: #fff;
  font: 9px/6px ${sans};
  letter-spacing: 0;
  color: #234;
`;
const Tick = styled.i`
  display: grid;
  place-items: center;
  width: 14px;
  height: 14px;
  border: 1px solid #888;
  background: #f4f8fb;
`;

const Right = styled.main`
  display: flex;
  flex-direction: column;
  width: 1999px;
  height: 1291px;
  border-right: 1px solid #000;
  border-bottom: 1px solid #000;
  padding-left: 2px;
`;
const Stage = styled.div`
  display: flex;
  height: 1084px;
`;
const Strip = styled.div`
  display: flex;
  flex-direction: column;
  align-items: center;
  width: 32px;
  padding: 21px 0 0 0;
`;
const StripGrip = styled.i`
  width: 20px;
  height: 2px;
  margin-bottom: 4px;
  background: repeating-linear-gradient(90deg, #555 0 2px, transparent 2px 6px);
`;
const StripButton = styled.span`
  display: grid;
  place-items: center;
  flex: none;
  width: 28px;
  height: 28.05px;
  ${(p) => p.$on && css`
    height: 27px;
    margin-bottom: 1px;
    border: 1px solid #888;
    background: linear-gradient(#fbe6cf, #f6b878);
  `}
`;
const Viewport = styled.div`
  width: 1958px;
  margin-top: 15px;
  border: 1px solid #4fe6ea;
  border-top-width: 2px;
  border-left-width: 2px;
  background: linear-gradient(#2f567c, #a3a1a0);
`;
const Canvas = styled.svg`display: block;`;
const Combo = styled.div`
  display: flex;
  align-items: center;
  height: 21px;
  background: #fff;
  font: 11px/1 ${sans};
  color: #000;
  padding-right: 5px;
  span { margin-left: 3px; flex: 1; }
`;
const Panel = styled.div`
  display: flex;
  align-items: flex-start;
  flex: 1;
  width: 1990px;
  border-top: 1px solid #8c8c8c;
  padding: 18px 27px 0 0;
  font-size: 13px;
  color: #000;
`;
const bevel = css`
  border: 1px solid #fff;
  border-right: 1px solid #555;
  border-bottom: 2px solid #666;
`;
const PanelButton = styled.button`
  display: grid;
  place-items: center;
  width: 56px;
  height: 21px;
  padding: 0;
  background: #f0f0f0;
  ${bevel}
`;
const Collector = styled.button`
  width: 336px;
  height: 21px;
  padding: 0 0 2px 5px;
  border: 2px solid #2de8ea;
  background: #e4ec69;
  font: 12.5px/1 ${ui};
  color: #222;
`;
const CheckLabel = styled.label`
  display: flex;
  align-items: center;
  gap: 22px;
  margin-left: 442px;
  height: 21px;
  font-size: 12.5px;
`;
const CheckBox = styled.i`
  display: grid;
  place-items: center;
  width: 13px;
  height: 13px;
  border: 1px solid #666;
  background: #fff;
`;
const Actions = styled.div`
  display: flex;
  flex-direction: column;
  align-items: flex-end;
  margin-left: auto;
`;
const Action = styled.button`
  width: 189px;
  height: 21px;
  padding: 0 0 2px 5px;
  border: 1px solid #8ee789;
  border-right: 2px solid #3d7a3b;
  border-bottom: 2px solid #3a7638;
  background: #69d264;
  font: 13px/1 ${ui};
  color: #16310f;
`;
const Return = styled.button`
  width: 162px;
  height: 21px;
  margin-top: 63px;
  padding: 0 0 2px 4px;
  border: 2px solid #1c0508;
  background: #b9545f;
  box-shadow: inset -1px -1px #6d1d28;
  outline: 1px solid #8d6a6e;
  outline-offset: -1px;
  font: 13px/1 ${ui};
  color: #2c0a0e;
`;
const Status = styled.footer`
  display: flex;
  align-items: center;
  height: 21px;
  padding: 2px 0 0 4px;
  font: 11.5px/1 ${sans};
  letter-spacing: -0.5px;
  color: #000;
`;
const Field = styled.div`
  display: flex;
  align-items: center;
  width: 94px;
  height: 18px;
  margin-right: 2px;
  padding-left: 2px;
  border-left: 1px solid #333;
  border-top: 1px solid #333;
  letter-spacing: -0.2px;
  ${(p) => p.$first && "margin-left: auto;"}
  ${(p) => p.$last && "margin-right: 126px;"}
`;
const MiniSwatch = styled.i`
  width: 7px;
  height: 7px;
  margin: 0 5px 0 4px;
  border: 1px solid #222;
  background: #fbee70;
`;

/* ---------- taskbar ---------- */

const TaskBar = styled.footer`
  position: relative;
  display: flex;
  justify-content: space-between;
  height: 48px;
  padding-left: 941px;
  background: #030305;
  border-top: 1px solid #222;
`;
const Apps = styled.div`
  display: flex;
  align-items: flex-start;
  height: 47px;
`;
const AppButton = styled.span`
  display: flex;
  flex-direction: column;
  align-items: center;
  width: 44px;
  padding-top: 12px;
  gap: 4px;
  &::after {
    content: "";
    width: 6px;
    height: 3px;
    border-radius: 2px;
    background: ${(p) => (p.$run ? "#8b8b8b" : "transparent")};
  }
`;
const SearchPill = styled.span`
  display: flex;
  align-items: center;
  gap: 5px;
  width: 100px;
  height: 32px;
  margin: 7px 3px 0 4px;
  padding-left: 28px;
  border-radius: 16px;
  background: #15171a;
  color: #fff;
  font: 12px/1 "Noto Sans CJK SC", sans-serif;
`;
const Tray = styled.div`
  display: flex;
  align-items: center;
  color: #fff;
  padding-right: 20px;
`;
const Clock = styled.div`
  display: flex;
  flex-direction: column;
  gap: 4px;
  width: 60px;
  margin-left: 10px;
  text-align: right;
  font: 11.5px/12px ${ui};
`;
const Badge = styled.span`
  display: grid;
  place-items: center;
  width: 16px;
  height: 16px;
  margin-left: 7px;
  border-radius: 50%;
  background: #dbb6c6;
  color: #333;
  font-size: 10px;
`;
const Zh = styled.span`
  width: ${(p) => p.$w || 16}px;
  margin-left: ${(p) => p.$ml || 0}px;
  text-align: center;
  color: ${(p) => p.$c || "#fff"};
  font: ${(p) => p.$b || 400} ${(p) => p.$s || 13}px/1 "Noto Sans CJK SC", sans-serif;
`;

const SLogo = () => (
  <g>
    <path d="M2 5L20 1l3 17L6 23z" fill="#e2512c" />
    <path d="M18 6Q9 4 8 8Q8 11 13 11.5Q18 13 16 16Q13 19 7 17" fill="none" stroke="#fff" strokeWidth="3.2" />
  </g>
);
const apps = {
  start: <g fill="#4cc2f5"><path d="M0 0h11.300v11.300H0zM12.600 0H24v11.300H12.600zM0 12.600h11.300V24H0zM12.600 12.600H24V24H12.600z" /></g>,
  task: <><rect x="7" y="1" width="17" height="16" fill="#f2f2f2" /><rect x="0" y="7" width="17" height="16" fill="#777" opacity=".85" /></>,
  files: <><path d="M1 2h8l2 3h11v5H1z" fill="#d9a016" /><rect x="0" y="5" width="24" height="17" rx="1" fill="#fdcf46" /><path d="M4 22v-5q0-2 2-2h12q2 0 2 2v5z" fill="#2580c4" /></>,
  edge: <><circle cx="12" cy="12" r="12" fill="#1b7fd0" /><path d="M0 11Q2 0 13 0Q24 1 24 10Q23 16 16 15.500Q14 15 15.500 12Q15 6 9 6Q3 6 0 11z" fill="#3ccfae" /><path d="M16 1Q24 4 24 10Q23 16 16 15.500Q18 9 16 1z" fill="#6fdc5a" opacity=".7" /><path d="M9 10Q6 19 15 20Q20 20 22.500 17.500Q18 25 10 23.500Q3 20 4 14Q5 9.500 9 10z" fill="#0d4f9c" /><path d="M11 9Q15 10 15 12.500Q13 15 16 17Q20 18 23 15L22.500 17.500Q14 22 10.500 16Q9 12 11 9z" fill="#030305" /></>,
  store: <><path d="M7 6V2q0-1 1-1h8q1 0 1 1v4" fill="none" stroke="#3bb3e8" strokeWidth="1.6" /><path d="M0 5h24v15q0 4-4 4H4q-4 0-4-4z" fill="#f4f4f4" /><path d="M7 10h4.500v4.500H7z" fill="#e0482a" /><path d="M12.500 10H17v4.500h-4.500z" fill="#6fae2a" /><path d="M7 15.500h4.500V20H7z" fill="#2c93d8" /><path d="M12.500 15.500H17V20h-4.500z" fill="#f0b020" /></>,
  music: <><rect width="24" height="24" rx="3" fill="#cc0a22" /><path d="M17 4.500Q13 3 12.800 7L14 13A2.600 2.600 0 1 1 11 11Q17 7 18.500 13Q18 20 12 20Q5 19 6 12Q7 8 10 7" fill="none" stroke="#fff" strokeWidth="1.9" /></>,
  chrome: <><circle cx="12" cy="12" r="12" fill="#f6c417" /><path d="M12 12L1.600 6A12 12 0 0 1 22.400 6z" fill="#dd3a2c" /><path d="M12 12L1.600 6A12 12 0 0 0 11 24z" fill="#2d9e4b" /><circle cx="12" cy="12" r="5.6" fill="#fff" /><circle cx="12" cy="12" r="4.4" fill="#2f79e8" /></>,
  wps: <><path d="M0 3h9l1 3H5l3 13 4-12h3l2 10 3-11h-4l1-3h7l-5 19h-5l-2-9-4 9H6z" fill="#e62a1c" /></>,
  hw: <><rect x="2" y="2" width="20" height="21" rx="3" fill="#a9c2e2" /><path d="M8 2Q12 12 8 23h8Q12 12 16 2z" fill="#fff" /><path d="M9 2h6l-3 8zM9 23h6l-3-8z" fill="#dfe9f5" /><path d="M3.500 4v17M20.500 4v17" stroke="#5f7fae" strokeWidth="2" /></>,
  term: <><rect x="0" y="3" width="24" height="19" rx="1" fill="#4a4a4a" /><rect x="0" y="3" width="24" height="3.5" fill="#8a8a8a" /><path d="M4 9l5 4-5 4" fill="none" stroke="#fff" strokeWidth="1.8" /><path d="M11 18h7" stroke="#fff" strokeWidth="1.8" /></>,
  clion: <><path d="M1 5L8 0l8 2 7 1-1 8 2 6-5 7-9-2-8 1 0-9z" fill="#2bd98c" /><path d="M12 0l8 2-5 6z" fill="#e0457b" /><rect x="5" y="5" width="14" height="14" fill="#000" /><text x="6" y="13" fontSize="8.5" fontWeight="700" fill="#fff" fontFamily="Roboto, sans-serif">CL</text><path d="M7 16.500h5" stroke="#fff" strokeWidth="1.3" /></>,
  code: <><path d="M17 0l6 3v18l-6 3L6 14l-4 3-2-1V8l2-1 4 3z" fill="#2492d8" /><path d="M17 7v10l-7-5z" fill="#04090d" /><path d="M2 9.500L4.500 12 2 14.500z" fill="#04090d" /></>,
  todesk: <><rect width="24" height="24" rx="4" fill="#fff" /><path d="M10 4h11l-2 13h-6l1-7h-5z" fill="#18d3e4" /><path d="M3 8h12l-2 12H8l1-7H3z" fill="#1268f6" /></>,
};
const appList = [["task"], ["files", 1], ["edge"], ["store"], ["music"], ["chrome", 1], ["wps", 1], ["hw", 1], ["term", 1], ["clion", 1], ["code", 1], ["todesk", 1]];
const AppIcon = ({ n }) => <Svg $s={23} viewBox="0 0 24 24">{apps[n]}</Svg>;

const ImeBar = styled.div`
  position: absolute;
  left: 2382px;
  top: 1362px;
  display: flex;
  align-items: center;
  width: 178px;
  height: 30px;
`;
const ImeLogo = styled(Svg)`
  position: relative;
  z-index: 1;
`;
const ImeTray = styled.div`
  display: flex;
  align-items: center;
  justify-content: space-between;
  flex: 1;
  height: 25px;
  margin: 5px 0 0 -20px;
  padding: 0 5px 0 25px;
  border: 1px solid #b9d4ee;
  background: #fff;
`;
const SideTab = styled.div`
  position: absolute;
  right: 0;
  top: 1200px;
  display: grid;
  place-items: center;
  width: 24px;
  height: 32px;
  border-radius: 16px 0 0 16px;
  background: linear-gradient(90deg, #6ca0fa, #3c78ee);
`;
const Bubble = styled.div`
  position: absolute;
  left: 2273px;
  top: 155px;
  display: grid;
  place-items: center;
  width: 62px;
  height: 62px;
  border-radius: 50%;
  background: #f2f7fb;
`;
const Note = styled.span`
  position: absolute;
  left: ${(p) => p.$x}px;
  top: ${(p) => p.$y}px;
  font: 26px/1 ${sans};
  letter-spacing: ${(p) => p.$ls || 0}px;
  color: ${red};
`;
const Frame = styled.i`
  position: absolute;
  left: ${(p) => p.$x}px;
  top: ${(p) => p.$y}px;
  width: ${(p) => p.$w}px;
  height: ${(p) => p.$h}px;
  border: 3px solid ${red};
`;
const Ink = styled.svg`
  position: absolute;
  left: 0;
  top: 0;
  pointer-events: none;
`;

/* ---------- data ---------- */

const menus = [["F", "ile", "", 33], ["E", "dit", "", 36], ["V", "iew", "", 41], ["C", "ollectors", "", 72], ["G", "eometry", "", 71], ["M", "esh", "", 46],
  ["n", "nectors", "Co", 80], ["l", "s", "Materia", 67.5], ["P", "roperties", "", 74.5], ["B", "Cs", "", 36], ["S", "etup", "", 47], ["T", "ools", "", 46],
  ["i", "ng", "Morph", 72], ["o", "st", "P", 39], ["X", "YPlots", "", 57], ["r", "ences", "Prefe", 82], ["A", "pplications", "", 85], ["H", "elp", "", 60]];

const tree = [
  ["tAsm", "Assemblies (4)", 1, "a", [["Bolts", 3, "#ea0000"], ["Crane", 4, "#5490c8"], ["Hydraulic", 2, "#0010f0"], ["Structure", 1, "#16ff16"]]],
  ["tBeam", "Beam Section Collectors (1)"],
  ["tCard", "Cards (1)"],
  ["tComp", "Components (25)", 1, "c", [
    ["b_c_link-GEOM-2D", 12, "#a070f8"], ["b_t_link-GEOM-2D", 10, "#6e0018"], ["bottom_p-GEOM-3D", 29, "#dd1478"], ["bucket_p-GEOM-3D", 27, "#f8b6be"],
    ["cyl1-GEOM-2D", 4, "#7c521c"], ["cyl1_p-GEOM-3D", 26, "#5490c4"], ["cyl2-GEOM-1D", 6, "#ee2418"], ["cyl3-GEOM-1D", 8, "#68b6fa"],
    ["f_c_link-GEOM-2D", 13, "#a070f8"], ["f_t_link-GEOM-2D", 11, "#70003c"], ["link1-GEOM-2D", 2, "#16ff16"], ["link1_pin-GEOM-3D", 22, "#c05c44"],
    ["link2-GEOM-2D", 3, "#0010f0"], ["middle_p-GEOM-3D", 30, "#b01464"], ["pin1-GEOM-3D", 24, "#68b6fa"], ["pin2-GEOM-3D", 28, "#ee1c8c"],
    ["pin3-GEOM-3D", 23, "#7c341c"], ["piston1-GEOM-1D", 5, "#ccba64"], ["piston2-GEOM-1D", 7, "#f8b6c0"], ["piston3-GEOM-1D", 9, "#34587e"],
    ["Schaufel-GEOM-2D", 14, "#fbf080"], ["supp_cyl_pin-GEOM-3D", 20, "#f07c60"], ["supp_pin-GEOM-3D", 21, "#e07058"], ["Support-GEOM-3D", 1, "#d81c1c"],
    ["top_p-GEOM-3D", 25, "#5ca8e4"]]],
  ["tLoad", "Load Collectors (4)"],
  ["tStep", "Load Steps (3)"],
  ["tMat", "Materials (3)", 1, "m", [["Steel_S355J2H", 2, "#68b6fa"], ["Steel", 1, "#ccba64"], ["mat8", 3, "#e80000"]]],
  ["tProp", "Properties (7)"],
  ["tSet", "Sets (28)"],
  ["tTitle", "Titles (1)"],
  ["tView", "Views (3)"],
];

const N = "#f4f4f4", M = "#efefef";
const props = [
  [20.5, "Name:", "Schaufel-GEOM-2D"], [20.5, "ID:", "14"], [20.5, "Color:", "#fbf080"], [20.5, "Include:", "[Main Model]", { dim: 1 }],
  [20.5, "Property:", "(11) prop_t0050", { tg: "−" }],
  [39.5, "Name:", "prop_t0050", { bg: N }], [39.5, "ID:", "11", { bg: N }], [39.5, "Color:", "#66ff66", { bg: N }],
  [39.5, "Include:", "[Main Model]", { bg: N, dim: 1 }], [39.5, "Defined:", "check", { bg: N }], [39.5, "Card Image:", "<None>", { bg: N }],
  [39.5, "Material:", "(1) Steel", { bg: N, tg: "+" }], [37, "Metadata", "", { bg: M, bold: 1 }],
  [20.5, "Material:", "(1) Steel"], [20.5, "FE style:", "icon:fe"], [20.5, "Geometry style:", "icon:geo"], [18, "Metadata", "", { bg: M, bold: 1 }],
];

const strip = ["mask", "mask2", "mask3", "mask4", "mask5", "mask6", "binoc", "nums", "range", "abc1", "abc2", "shift", "surf", "bottle"];

/* ---------- mesh geometry ---------- */

const upper = "66,1470 170,1330 313,1220 483,1151 662,1096 810,993 910,852 947,686 964,518 1027,359 1139,221 1290,122 1465,62 1653,52 1833,91 1996,173 2122,290 2215,447 2297,598 2393,744 2498,885 2622,1016 2751,1137 2888,1254 2997,1387";
const lower = "2836,1385 2672,1385 2510,1384 2346,1382 2182,1381 2019,1380 1855,1379 1693,1379 1530,1377 1367,1376 1203,1375 1041,1373 876,1371 713,1371 551,1370 386,1369 285,1392 202,1440 141,1511";
const ring = "1563,223 1390,264 1248,366 1159,506 1143,665 1190,821 1297,948 1453,1027 1631,1047 1803,1002 1946,905 2034,764 2053,602 2008,446 1895,322 1740,242".split(" ");
const hole = "1567,317 1435,352 1327,429 1259,537 1246,661 1283,781 1369,879 1487,940 1625,952 1759,918 1867,842 1933,734 1948,608 1913,488 1826,391 1706,331".split(" ");
const edges = [
  "1465,62 1563,223 1653,52", "1833,91 1740,242", "1996,173 1895,322", "2122,300 2008,446", "2215,447 2053,602", "2297,598 2034,764",
  "1290,122 1390,264", "1139,221 1248,366", "1027,359 1159,506", "964,518 1143,665", "947,686 1190,821",
  "2393,744 2213,928 2034,764", "1946,905 2213,928 2189,1170 2182,1381", "2213,928 2419,1035 2557,1119 2674,1231 2888,1252",
  "2498,890 2419,1035 2369,1203 2346,1382", "2622,1016 2557,1119 2521,1240 2510,1384", "2751,1137 2674,1231 2672,1385", "2888,1254 2836,1385",
  "2674,1231 2521,1240 2369,1203 2189,1170 2002,1164 1831,1186 1685,1214 1552,1217 1400,1189 1193,1137 1000,1210 853,1247 715,1270 567,1262 695,1180 820,1136 932,1076 1043,967 1190,821",
  "1946,905 2002,1164 2019,1380", "1803,1002 1831,1186 1855,1379", "1693,1379 1685,1214 1631,1047 1552,1217 1530,1377",
  "1453,1027 1400,1189 1367,1376", "1297,948 1193,1137 1203,1375", "910,852 1043,967 1193,1137", "810,993 932,1076 1000,1210 1041,1373",
  "810,993 820,1136 853,1247 876,1371", "662,1096 695,1180 715,1270 713,1371", "483,1151 567,1262 551,1370", "313,1220 386,1369 567,1262",
  "285,1392 170,1330 202,1440",
  ...ring.map((p, i) => `${p} ${hole[i]}`),
];
const ids = [
  [128465, 1487, 153], [128459, 1327, 229], [128456, 1203, 348], [128453, 1133, 497], [128448, 1123, 659], [128443, 1084, 819], [128441, 987, 958],
  [128444, 1245, 955], [128438, 915, 1056], [128435, 806, 1089], [128439, 1103, 1084], [128445, 1398, 1061], [128431, 662, 1157], [128436, 963, 1155],
  [128433, 831, 1195], [128430, 719, 1223], [128428, 497, 1239], [128426, 350, 1314], [128427, 562, 1322], [128429, 697, 1306], [128432, 850, 1301],
  [128434, 1002, 1288], [128437, 1169, 1261], [128440, 1353, 1256], [128425, 279, 1375], [128424, 204, 1425], [110528, 1410, 338], [110529, 1308, 444],
  [110530, 1261, 578], [110531, 1274, 717], [110532, 1345, 844], [110533, 1462, 935], [110527, 1549, 275], [128472, 1620, 98], [128476, 1758, 138],
  [128478, 1926, 194], [128479, 2066, 297], [110526, 1703, 265], [110525, 1852, 308], [110524, 1970, 399], [128477, 2161, 434], [110523, 2039, 525],
  [128475, 2211, 588], [110538, 2051, 664], [128474, 2295, 745], [110537, 2003, 798], [128463, 2124, 852], [110536, 1902, 905], [128473, 2443, 884],
  [110534, 1611, 978], [110535, 1765, 968], [128469, 2587, 1001], [128458, 2147, 1028], [128455, 1956, 1051], [128462, 2357, 1071], [128451, 1798, 1099],
  [128447, 1572, 1107], [128449, 1687, 1147], [128464, 2528, 1137], [128468, 2713, 1112], [128466, 2646, 1183], [128471, 2832, 1193], [128442, 1525, 1276],
  [128446, 1678, 1284], [128450, 1828, 1276], [128452, 1987, 1264], [128454, 2158, 1261], [128457, 2332, 1271], [128460, 2497, 1288], [128461, 2652, 1297],
  [128467, 2828, 1302], [128470, 2967, 1329],
];
const OX = 106, OY = 246, SX = 1 / 2.8, SY = 620 / 1568;
const pt = (s) => s.split(" ").map((q) => { const [x, y] = q.split(","); return `${(OX + x * SX).toFixed(1)},${(OY + y * SY).toFixed(1)}`; });
const path = (s) => `M${pt(s).join("L")}`;

const Model = () => (
  <Canvas width="1955" height="1066">
    <path d={`${path(`${upper} ${lower}`)}Z${path(hole.join(" "))}Z`} fill="#e3d77a" fillRule="evenodd" stroke="#25251c" strokeWidth="1.1" />
    <path d={edges.map(path).join("")} fill="none" stroke="#978a3e" strokeWidth="1.05" />
    <path d={`${path(ring.join(" "))}Z`} fill="none" stroke="#2c2508" strokeWidth="1.1" />
    <g fill="#fff" fontFamily={'"Noto Sans", sans-serif'} fontSize="12.3" textAnchor="middle">
      {ids.map(([n, x, y]) => <text key={n} x={OX + x * SX} y={OY + y * SY + 4.4}>{n}</text>)}
    </g>
    <g fill="none">
      <path d="M20.500 1042V948" stroke="#1cf01c" strokeWidth="2" />
      <path d="M20.500 948l-6 37h12z" stroke="#35f035" strokeWidth="1.3" />
      <path d="M22 1044h92M80 1037.500v13l36-6.500z" stroke="#c01828" strokeWidth="1.2" />
      <path d="M14.500 1044l6-7 6 7-6 7zM14.500 1044h12M20.500 1037v14" stroke="#1414d8" strokeWidth="1.2" />
    </g>
    <g fill="#fff" fontFamily={'"Noto Sans", sans-serif'} fontSize="11.5">
      <text x="20" y="928">Y</text><text x="135" y="1043">X</text><text x="20" y="1043">Z</text>
    </g>
  </Canvas>
);

const bottomTools = [
  ["grip", 566], ["tv", 585.5], ["v", 603.5], ["grip", 617.5], ["bAsm", 636], ["bComp", 664], ["bMat", 692], ["bProp", 720], ["bLoad", 749], ["bSys", 777],
  ["v", 794], ["sep", 804.5], ["del", 824], ["cards", 852], ["moveF", 880], ["renum", 908], ["grip", 930],
  ["node", 984, <Combo key="a"><Ico n="autoI" s={18} h={21} ml={0} /><span>Auto</span><Caret /></Combo>, 98],
  ["curveW", 1048], ["v", 1066.5], ["curveP", 1086], ["v", 1104.5], ["cubeP", 1123.5], ["sep", 1142.5],
  ["node", 1200, <Combo key="b"><Ico n="compI" s={18} h={21} ml={0} /><span>By Comp</span><Caret /></Combo>, 104],
  ["cubeWM", 1266.5], ["v", 1285.5], ["cubePM", 1305], ["v", 1323.5], ["line1d", 1343.5], ["v", 1361.5], ["sh2d", 1380.5], ["v", 1399],
  ["sh3d", 1418.5], ["v", 1437], ["dotsI", 1457], ["monitor", 1485], ["grip", 1507], ["star", 1526],
].map(([k, c, ...r]) => [k, c - 560, ...r]);

const viewTools = [["sheet", 20], ["v", 38], ["eyeTree1", 58], ["eyeTree2", 88], ["eyeTree3", 118], ["boxBlue", 370], ["v", 388], ["meshSheet", 406.5], ["v", 425],
  ["cursor", 445], ["highlight", 475], ["eyePM", 505], ["eyeOne", 535]].map(([k, c]) => [k, c - 4]);

const childIcons = (kind, on) => {
  if (kind === "a") return <><Ico n="fSheet" s={17} ml={1} /><Ico n="fMesh" s={17} ml={1} /></>;
  if (kind === "c") return <><Ico n={on ? "cSheetOn" : "cSheet"} s={15} ml={1} /><Ico n={on ? "cMeshOn" : "cMesh"} s={14} ml={3} /></>;
  return <Ico n="mat" s={15} />;
};
const childLeft = { a: 2, c: 5, m: 8 };
const childWidth = { a: 127, c: 127, m: 142 };

/* A tapered arrow whose shaft widens towards its tip. */
const Dart = ({ x1, y1, x2, y2, w = 2.4, hw = 6.5, hl = 14 }) => {
  const L = Math.hypot(x2 - x1, y2 - y1), ux = (x2 - x1) / L, uy = (y2 - y1) / L;
  const bx = x2 - ux * hl, by = y2 - uy * hl;
  const q = (a, b, k) => `${(a - uy * k).toFixed(1)} ${(b + ux * k).toFixed(1)}`;
  return <path fill={red} d={`M${q(x1, y1, 0.5)}L${q(bx + ux * 3, by + uy * 3, w)}L${q(bx, by, hw)}L${x2} ${y2}L${q(bx, by, -hw)}L${q(bx + ux * 3, by + uy * 3, -w)}L${q(x1, y1, -0.5)}z`} />;
};

const value = (v) => {
  if (v[0] === "#") return <Swatch $c={v} />;
  if (v === "check") return <Tick><Svg $s={11} viewBox="0 0 12 12"><path d="M2 5l3 5 5-9" fill="none" stroke="#1b6fa8" strokeWidth="2.4" /></Svg></Tick>;
  if (v.startsWith("icon:")) return <Ico n={v.slice(5)} s={14} h={v.endsWith("geo") ? 9 : 13} />;
  return v;
};

export default function App() {
  return (
    <Page>
      <Global />
      <TitleBar>
        <Svg $s={11} $h={14} viewBox="0 0 12 14"><path d="M0 1h4l1 5h2l1-5h4v12H8L7 8H5l-1 5H0z" fill="#4f92c4" /></Svg>
        <Caption>Untitled - HyperWorks 2022 - Abaqus (Standard3D)</Caption>
        <WinButtons>
          <Svg $s={11} viewBox="0 0 11 11"><path d="M0 5.500h10" stroke="#777" /></Svg>
          <Svg $s={11} viewBox="0 0 11 11"><path d="M.5 3q0-.5.5-.5h6q.5 0 .5.500v7h-7zM3 .5h5.500q1.500 0 1.500 1.500V8" fill="none" stroke="#777" /></Svg>
          <Svg $s={11} viewBox="0 0 11 11"><path d="M.5.500l10 10M10.500.500l-10 10" stroke="#777" /></Svg>
        </WinButtons>
      </TitleBar>
      <MenuBar>
        {menus.map(([u, post, pre, w]) => <MenuItem key={pre + u + post} $w={w}>{pre}<u>{u}</u>{post}</MenuItem>)}
      </MenuBar>
      <ToolBar $pb={2}>
        <Tools items={topTools} size={23} />
        <Pager>
          <Svg $s={22} $h={18} viewBox="0 0 22 18"><path d="M0 9l9-8v4h13v8H9v4z" fill="#cfe6e8" stroke="#b7d8db" /></Svg>
          <Svg $s={22} $h={18} viewBox="0 0 22 18"><path d="M22 9l-9-8v4H0v8h13v4z" fill="#cfe6e8" stroke="#b7d8db" /></Svg>
          <PageBox>1</PageBox>
          <span>of 1</span>
        </Pager>
      </ToolBar>
      <Body>
        <Left>
          <Tabs>
            <Tab $w={60}>Session</Tab>
            <Tab $w={42}>Mask</Tab>
            <Tab $w={47} $on>Model<CloseMark>×</CloseMark></Tab>
          </Tabs>
          <Box $h={873}>
            <Views>
              {["fGray", "fTree", "fComp", "fMat", "fProp", "fAsm", "fBeam"].map((n, i) => (
                <ViewButton key={n} $on={i === 0}><Ico n={n} s={23} /></ViewButton>
              ))}
            </Views>
            <Search>
              <span>Search</span>
              <Svg $s={13} viewBox="0 0 13 13"><circle cx="6" cy="5.5" r="4.3" fill="none" stroke="#555" strokeWidth="1.2" /><path d="M9 9l3 3" stroke="#555" strokeWidth="1.4" /></Svg>
            </Search>
            <ToolBar $h={37}><Tools items={viewTools} size={21} /></ToolBar>
            <HeadRow>
              <HeadCell $w={207}>Name</HeadCell>
              <HeadCell $w={25} $j="flex-end">ID</HeadCell>
              <HeadCell $w={24} $pad="1px 0 0 2px"><Wheel /></HeadCell>
              <HeadCell $w={47}>Include</HeadCell>
            </HeadRow>
            <Tree>
              {tree.map(([ic, label, open, kind, kids]) => (
                <React.Fragment key={label}>
                  <Row>
                    <Guide $w={11} $tick $end={label === "Views (3)"}><Twist $open={open} /></Guide>
                    <Ico n={ic} s={16} />
                    <Name>{label}</Name>
                  </Row>
                  {kids && kids.map(([n, id, c], i) => {
                    const on = n.startsWith("Schaufel");
                    return (
                      <Row key={n} $on={on}>
                        <Guide $w={19} />
                        <Guide $w={kind === "m" ? 12 : 13} $tick $end={i === kids.length - 1} />
                        {childIcons(kind, on)}
                        <Name $ml={childLeft[kind]} $w={childWidth[kind]}>{n}</Name>
                        <Num $w={20}>{id}</Num>
                        <Swatch $c={c} $ml={7} />
                        <Num $w={51}>0</Num>
                      </Row>
                    );
                  })}
                </React.Fragment>
              ))}
            </Tree>
          </Box>
          <Splitter>
            ...
            <Chevrons $s={7} $h={8} viewBox="0 0 7 8"><path d="M1 1l2.500 2L6 1M1 4.500l2.500 2 2.500-2" fill="none" stroke="#444" /></Chevrons>
          </Splitter>
          <Box $h={392} $bg="#fff">
            <PropHead><span>Name</span><span>Value</span></PropHead>
            {props.map(([pl, label, v, o = {}], i) => (
              <PropRow key={i} $bg={o.bg} $dim={o.dim} $bold={o.bold}>
                <PropLabel $pl={pl}>{o.tg && <Toggle>{o.tg}</Toggle>}{label}</PropLabel>
                {value(v)}
              </PropRow>
            ))}
          </Box>
        </Left>
        <Right>
          <Stage>
            <Strip>
              <StripGrip />
              {strip.map((n) => <StripButton key={n} $on={n.startsWith("abc")}><Ico n={n} s={22} /></StripButton>)}
            </Strip>
            <Viewport><Model /></Viewport>
          </Stage>
          <ToolBar $h={37} $pb={5}><Tools items={bottomTools} size={23} /></ToolBar>
          <Panel>
            <PanelButton><Svg $s={11} $h={6} viewBox="0 0 11 6"><path d="M0 0h11L5.500 6z" /></Svg></PanelButton>
            <PanelButton><Svg $s={11} $h={6} viewBox="0 0 11 6"><path d="M0 0h11L5.500 6z" /></Svg></PanelButton>
            <Collector>elems</Collector>
            <PanelButton><Svg $s={11} $h={10} viewBox="0 0 11 10"><path d="M0 0h2.500v10H0zM9 0v10L3.500 5zM8 0h2v10H8z" /></Svg></PanelButton>
            <CheckLabel>
              <CheckBox><Svg $s={9} viewBox="0 0 9 9"><path d="M1 4l2.500 3L8 1" fill="none" stroke="#000" strokeWidth="1.8" /></Svg></CheckBox>
              display
            </CheckLabel>
            <Actions>
              <Action>on</Action>
              <Action>off</Action>
              <Action>all off</Action>
              <Return>return</Return>
            </Actions>
          </Panel>
        </Right>
      </Body>
      <Status>
        <span>Numbers</span>
        <Field $first />
        <Field>Model</Field>
        <Field $last><MiniSwatch />Schaufel</Field>
      </Status>
      <TaskBar>
        <Apps>
          <AppButton><AppIcon n="start" /></AppButton>
          <SearchPill>
            <Svg $s={14} viewBox="0 0 14 14"><circle cx="6" cy="6" r="4.8" fill="none" stroke="#fff" strokeWidth="1.5" /><path d="M9.500 9.500l4 4" stroke="#fff" strokeWidth="1.5" /></Svg>
            搜索
          </SearchPill>
          {appList.map(([n, run]) => <AppButton key={n} $run={run}><AppIcon n={n} /></AppButton>)}
        </Apps>
        <Tray>
          <Svg $s={14} $h={8} viewBox="0 0 14 8"><path d="M1 7l6-6 6 6" fill="none" stroke="#fff" strokeWidth="1.2" /></Svg>
          <Svg $s={18} $ml={8} viewBox="0 0 18 18"><ellipse cx="7" cy="7" rx="6.5" ry="5.5" fill="#33d15c" /><ellipse cx="12" cy="11.5" rx="5.5" ry="4.5" fill="#dcdcdc" /></Svg>
          <Svg $s={14} $h={16} $ml={7} viewBox="0 0 14 16"><ellipse cx="7" cy="9" rx="5.5" ry="6" fill="#222" /><circle cx="7" cy="4" r="4" fill="#222" /><ellipse cx="7" cy="11" rx="4" ry="4" fill="#fff" /><path d="M2 6.500Q7 10 12 6.500L13 9Q7 12 2 9z" fill="#e01c20" /><circle cx="5.5" cy="3" r="1.3" fill="#fff" /><circle cx="8.5" cy="3" r="1.3" fill="#fff" /><path d="M2 14h4v2H1zM8 14h4l1 2H8z" fill="#f09820" /></Svg>
          <Svg $s={16} $ml={14} viewBox="0 0 16 16"><path d="M15 1L1 8.500l6 .500 3 6z" fill="none" stroke="#fff" strokeWidth="1.2" /></Svg>
          <Zh $ml={16} $w={16}>中</Zh>
          <Svg $s={17} $ml={22} viewBox="0 0 24 24"><SLogo /></Svg>
          <Svg $s={17} $ml={21} viewBox="0 0 17 17"><path d="M10 2H1v11h11V9M4 16h6M7 13v3" fill="none" stroke="#fff" strokeWidth="1.2" /><rect x="12" y="1" width="4" height="5" rx="1" fill="none" stroke="#fff" /><path d="M14 6v8" stroke="#fff" /></Svg>
          <Svg $s={17} $ml={7} viewBox="0 0 17 14"><path d="M1 5h3l4-3.500v11L4 9H1z" fill="none" stroke="#fff" strokeWidth="1.2" /><path d="M10 5q1.500 2 0 4" fill="none" stroke="#fff" strokeWidth="1.2" /><path d="M12 3q3 4 0 8M14 1.500q4 5.500 0 11" fill="none" stroke="#666" /></Svg>
          <Clock><span>10:46</span><span>2023/1/22</span></Clock>
          <Badge>6</Badge>
        </Tray>
      </TaskBar>

      <ImeBar>
        <ImeLogo $s={32} viewBox="0 0 24 24"><SLogo /></ImeLogo>
        <ImeTray>
          <Zh $c="#0a6fd6" $b={700} $s={15}>中</Zh>
          <Svg $s={13} viewBox="0 0 13 13"><circle cx="3" cy="4" r="2" fill="none" stroke="#0a6fd6" strokeWidth="1.5" /><path d="M9 7h3v3q0 2-3 3 1-2 1-3H9z" fill="#0a6fd6" /></Svg>
          <Svg $s={15} viewBox="0 0 15 17"><rect x="5" y="0" width="5" height="10" rx="2.5" fill="#0a6fd6" /><path d="M2 7q0 6 5.500 6T13 7M7.500 13v4" fill="none" stroke="#0a6fd6" strokeWidth="1.6" /></Svg>
          <Svg $s={16} $h={13} viewBox="0 0 16 13"><rect x="1" y="1" width="14" height="11" rx="1.5" fill="none" stroke="#0a6fd6" strokeWidth="1.6" /><path d="M3.500 4.500h9M3.500 7h9" stroke="#0a6fd6" strokeWidth="1.3" strokeDasharray="1.5 1" /><path d="M5 9.500h6" stroke="#0a6fd6" strokeWidth="1.3" /></Svg>
          <Svg $s={16} $h={14} viewBox="0 0 16 14"><path d="M5 0q3 3 6 0l5 3-2 4-2-1v8H4V6L2 7 0 3z" fill="#0a6fd6" /></Svg>
          <Svg $s={13} viewBox="0 0 13 13"><path d="M0 1.500Q0 0 1.500 0H6v6H1.500Q0 6 0 4.500zM0 7h6v6H1.500Q0 13 0 11.500zM7 7h6v4.500q0 1.500-1.500 1.500H7z" fill="#0a6fd6" /><circle cx="10" cy="3" r="2.2" fill="none" stroke="#0a6fd6" strokeWidth="1.6" /></Svg>
        </ImeTray>
      </ImeBar>
      <SideTab><Svg $s={12} viewBox="0 0 12 12"><path d="M9 1L4.500 6 9 11" fill="none" stroke="#fff" strokeWidth="2" /></Svg></SideTab>
      <Bubble>
        <Svg $s={38} $h={34} viewBox="0 0 38 34"><path d="M16 2l21-1-3 25-10-1 1-12-10-1z" fill="#07d3e3" /><path d="M2 9l22-1-3 24-10-1 1-11-11-1z" fill="#0573ff" /><path d="M15.500 8.300L24 8l-.6 5-8-.5z" fill="#0450e0" /></Svg>
      </Bubble>

      <Note $x={599} $y={104}>Mask</Note>
      <Note $x={599} $y={301} $ls={0.13}>Display Numbers</Note>
      <Note $x={331} $y={684}>Isolate</Note>
      <Frame $x={560} $y={101} $w={32} $h={32} />
      <Frame $x={557} $y={301} $w={40} $h={29} />
      <Frame $x={38} $y={684} $w={274} $h={21} />
      <Frame $x={720} $y={349} $w={1064} $h={599} />
      <Ink width="2560" height="1440">
        <Dart x1={294} y1={668} x2={561} y2={142} />
        <Dart x1={599} y1={138} x2={601} y2={297} w={1.8} hw={4.5} hl={10} />
        <Dart x1={619} y1={335} x2={815} y2={489} w={2} hw={5.5} hl={11} />
      </Ink>
    </Page>
  );
}
